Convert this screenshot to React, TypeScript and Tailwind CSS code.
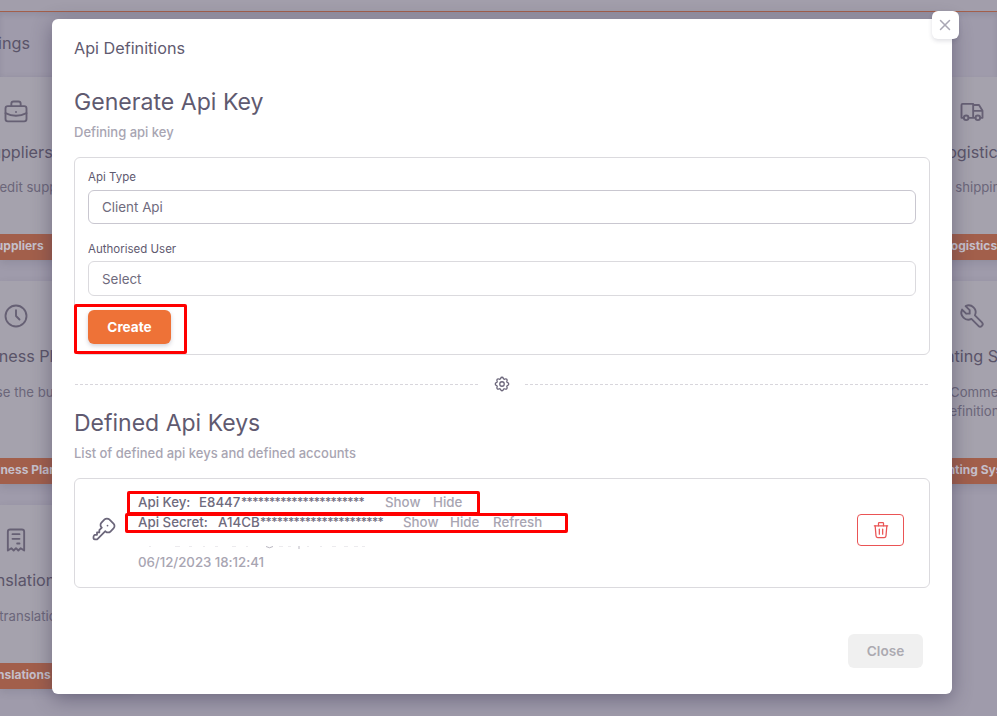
import React from "react";
import { TbBriefcase, TbClock, TbReceipt, TbTruck, TbTool, TbSettings, TbTrash, TbKey, TbX } from "react-icons/tb";

type CardProps = {
  icon: React.ReactNode;
  title: string;
  titleClass: string;
  text: React.ReactNode;
  textClass: string;
  action: string;
  actionClass: string;
  side: string;
  height: string;
};

function Card({ icon, title, titleClass, text, textClass, action, actionClass, side, height }: CardProps) {
  return (
    <div className={`flex w-[130px] flex-col overflow-hidden whitespace-nowrap bg-[#a5a2ad] shadow-[0_3px_8px_rgba(60,55,80,0.14)] ${height}`}>
      <div className={`mt-[21px] h-7 text-[#666074] ${side}`}>{icon}</div>
      <div className={`mt-[14px] h-[24px] text-[16.2px] leading-[24px] text-[#5a5469] ${titleClass}`}>{title}</div>
      <div className={`text-[13.2px] leading-[19px] text-[#6b667a] ${textClass}`}>{text}</div>
      <div className="mt-auto h-[26px] bg-[#a25f4b] text-[12px] font-bold leading-[24px] text-[#c5bfca]">
        <div className={actionClass}>{action}</div>
      </div>
    </div>
  );
}

function Backdrop() {
  return (
    <div className="flex h-[716px] flex-col overflow-hidden bg-[#9f9bab]">
      <div className="h-[12px] shrink-0 border-b border-[#a25f4b] bg-[#a29eab]" />
      <div className="h-[65px] shrink-0 pt-[19px] text-[16.2px] leading-[24px] text-[#5a5469] shadow-[inset_0_3px_5px_rgba(60,55,80,0.12)]">
        <div className="flex w-[30px] justify-end"><span>Settings</span></div>
      </div>
      <div className="flex justify-between">
        <div className="flex flex-col gap-[21px]">
          <Card icon={<TbBriefcase size={28} strokeWidth={1.6} />} side="ml-[2px]" title="Suppliers" titleClass="-ml-[19px]" text="Add / edit suppliers" textClass="mt-[14px] -ml-[38px]" action="Suppliers" actionClass="-ml-[12px]" height="h-[183px]" />
          <Card icon={<TbClock size={28} strokeWidth={1.6} />} side="ml-[2px]" title="Business Plans" titleClass="-ml-[34px]" text="Browse the business" textClass="mt-[15px] -ml-[36px]" action="Business Plans" actionClass="-ml-[25px]" height="h-[203px]" />
          <Card icon={<TbReceipt size={28} strokeWidth={1.6} />} side="ml-[2px]" title="Translations" titleClass="-ml-[29px]" text="Edit translations" textClass="mt-[15px] -ml-[28px]" action="Translations" actionClass="-ml-[22px]" height="h-[184px]" />
        </div>
        <div className="flex w-[65px] flex-col gap-[21px] overflow-hidden">
          <Card icon={<TbTruck size={28} strokeWidth={1.6} />} side="ml-[26px]" title="Logistics" titleClass="ml-[6px]" text="Edit shipping" textClass="mt-[14px] -ml-[4px]" action="Logistics" actionClass="ml-[12px]" height="h-[183px]" />
          <Card icon={<TbTool size={28} strokeWidth={1.6} />} side="ml-[26px]" title="Accounting System" titleClass="-ml-[36px]" text={<><span className="ml-[10px]">Commercial</span><br />Definitions</>} textClass="mt-[15px] ml-[8px]" action="Accounting System" actionClass="-ml-[22px]" height="h-[203px]" />
        </div>
      </div>
    </div>
  );
}

function Divider() {
  return (
    <div className="flex h-[28px] items-center px-px">
      <div className="h-px flex-1 bg-[repeating-linear-gradient(90deg,#d8d6dc_0_3px,transparent_3px_5px)]" />
      <TbSettings size={18} strokeWidth={1.7} className="mx-[14px] text-[#6b667a]" />
      <div className="h-px flex-1 bg-[repeating-linear-gradient(90deg,#d8d6dc_0_3px,transparent_3px_5px)]" />
    </div>
  );
}

/* Lower edge of the masked account line. */
function MaskedLine() {
  return (
    <svg className="block h-5 w-[230px]" viewBox="0 0 230 20" fill="none" stroke="#a8a5b2">
      <path d="M128 14.5q3.5 2.5 7 0" opacity=".8" />
      <path d="M161 14v3" opacity=".8" />
      <path d="M11 14.5h2M37 14.5h5M51 14.5h3M65 14.5h2M77 14.5h3M94 14.5h4M108 14.5h2M141 14.5h4M150 14.5h3M169 14.5h2M182 14.5h2M194 14.5h4M206 14.5h4M216 14.5h4M224 14.5h3" opacity=".22" />
    </svg>
  );
}

function Modal() {
  return (
    <section className="flex h-[675px] w-[900px] flex-col rounded-md bg-white px-[22px] text-[#5f5a70] shadow-[0_5px_20px_rgba(50,45,75,0.45)]">
      <h1 className="mt-[17px] text-[16.2px] leading-[24px]">Api Definitions</h1>
      <h2 className="mt-[26px] text-[23.1px] leading-[32px]">Generate Api Key</h2>
      <p className="mt-[4px] text-[13px] font-medium leading-[20px] text-[#a8a5b2]">Defining api key</p>
      <div className="mt-[15px] h-[198px] w-[856px] rounded-md border border-[#dbdade] px-[13px] pt-[11px]">
        <label className="block text-[11.5px] leading-[16px]">Api Type</label>
        <div className="mt-[5px] h-[34px] rounded-md border border-[#c9c7d0] px-[13px] text-[13.4px] leading-[33px] text-[#6f6b7d]">Client Api</div>
        <label className="mt-[17px] block text-[11.5px] leading-[16px]">Authorised User</label>
        <div className="mt-[4px] h-[35px] rounded-md border border-[#dbdade] px-[13px] text-[13.4px] leading-[34px] text-[#6f6b7d]">Select</div>
        <button className="mt-[14px] block h-[34px] w-[83px] rounded-md bg-[#ee7237] pt-px text-[13.6px] font-bold text-white shadow-[0_2px_4px_rgba(80,70,100,0.25)]">Create</button>
      </div>
      <div className="mt-[15px] w-[856px]"><Divider /></div>
      <h2 className="mt-[9px] text-[23px] leading-[32px]">Defined Api Keys</h2>
      <p className="mt-[4px] text-[13px] font-medium leading-[20px] text-[#a8a5b2]">List of defined api keys and defined accounts</p>
      <div className="mt-[15px] flex h-[110px] w-[856px] items-start rounded-md border border-[#dbdade] pl-[15px] pr-[25px]">
        <TbKey size={28} strokeWidth={1.5} className="mt-[36px] text-[#6b667a]" />
        <div className="ml-[20px] mt-[13px] flex-1 text-[13.3px] font-medium leading-[20px] text-[#6f6b7d]">
          <div className="flex"><span className="w-[61px]">Api Key:</span><span className="w-[42px]">E8447</span><span className="w-[144px] text-[12px] tracking-[-0.65px]">**********************</span><span className="w-[48px] text-[#a8a5b2]">Show</span><span className="text-[#a8a5b2]">Hide</span></div>
          <div className="flex"><span className="w-[80px]">Api Secret:</span><span className="w-[42px]">A14CB</span><span className="w-[143px] text-[12px] tracking-[-0.65px]">**********************</span><span className="w-[47px] text-[#a8a5b2]">Show</span><span className="w-[43px] text-[#a8a5b2]">Hide</span><span className="text-[#a8a5b2]">Refresh</span></div>
          <MaskedLine />
          <div className="tracking-[-0.05px] text-[#a8a5b2]">06/12/2023 18:12:41</div>
        </div>
        <button className="mt-[35px] flex h-[32px] w-[47px] items-center justify-center rounded-[4px] border border-[#ea5455] pb-px text-[#ea5455]"><TbTrash size={20} strokeWidth={1.5} /></button>
      </div>
      <button className="ml-[774px] mt-[46px] h-[34px] w-[75px] shrink-0 rounded-md bg-[#f0f0f0] text-[13.6px] font-semibold text-[#acaab1]">Close</button>
    </section>
  );
}

export default function App() {
  return (
    <main className="relative h-[716px] w-[997px] overflow-hidden font-['Inter',sans-serif]">
      <Backdrop />
      <div className="absolute left-[52px] top-[19px]"><Modal /></div>
      <button className="absolute left-[932px] top-[11px] flex h-[28px] w-[27px] items-center justify-center rounded-md bg-white pr-px text-[#aaa7b4] shadow-[0_2px_4px_rgba(50,45,75,0.15)]"><TbX size={18} strokeWidth={2} className="shrink-0" /></button>
      <div className="absolute left-[74px] top-[304px] h-[50px] w-[113px] rounded-[2px] border-[3px] border-[#ff0000]" />
      <div className="absolute left-[127px] top-[491px] h-[24px] w-[353px] rounded-[2px] border-[3px] border-[#ff0000]" />
      <div className="absolute left-[125px] top-[513px] h-[20px] w-[443px] rounded-[2px] border-[3px] border-[#ff0000]" />
    </main>
  );
}
